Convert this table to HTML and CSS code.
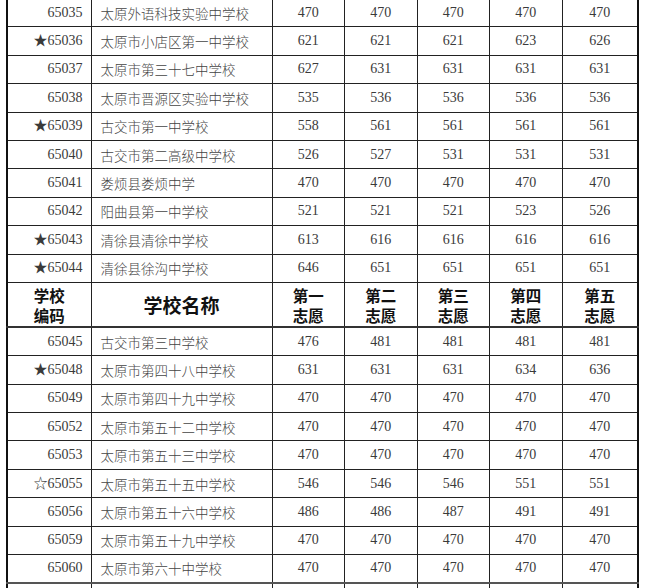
FILE: index.html
```html
<!DOCTYPE html>
<html lang="zh">
<head>
<meta charset="utf-8">
<title>志愿分数线</title>
<link rel="stylesheet" href="styles.css">
</head>
<body>
<table class="sheet">
<colgroup>
<col class="c-code"><col class="c-name"><col class="c-num"><col class="c-num"><col class="c-num"><col class="c-num"><col class="c-last">
</colgroup>
<tbody>
<tr><td class="code">65035</td><td class="name">太原外语科技实验中学校</td><td>470</td><td>470</td><td>470</td><td>470</td><td>470</td></tr>
<tr><td class="code">★65036</td><td class="name">太原市小店区第一中学校</td><td>621</td><td>621</td><td>621</td><td>623</td><td>626</td></tr>
<tr><td class="code">65037</td><td class="name">太原市第三十七中学校</td><td>627</td><td>631</td><td>631</td><td>631</td><td>631</td></tr>
<tr><td class="code">65038</td><td class="name">太原市晋源区实验中学校</td><td>535</td><td>536</td><td>536</td><td>536</td><td>536</td></tr>
<tr><td class="code">★65039</td><td class="name">古交市第一中学校</td><td>558</td><td>561</td><td>561</td><td>561</td><td>561</td></tr>
<tr><td class="code">65040</td><td class="name">古交市第二高级中学校</td><td>526</td><td>527</td><td>531</td><td>531</td><td>531</td></tr>
<tr><td class="code">65041</td><td class="name">娄烦县娄烦中学</td><td>470</td><td>470</td><td>470</td><td>470</td><td>470</td></tr>
<tr><td class="code">65042</td><td class="name">阳曲县第一中学校</td><td>521</td><td>521</td><td>521</td><td>523</td><td>526</td></tr>
<tr><td class="code">★65043</td><td class="name">清徐县清徐中学校</td><td>613</td><td>616</td><td>616</td><td>616</td><td>616</td></tr>
<tr><td class="code">★65044</td><td class="name">清徐县徐沟中学校</td><td>646</td><td>651</td><td>651</td><td>651</td><td>651</td></tr>
<tr class="head"><th><span class="ln">学校</span><span class="ln">编码</span></th><th class="big">学校名称</th><th><span class="ln">第一</span><span class="ln">志愿</span></th><th><span class="ln">第二</span><span class="ln">志愿</span></th><th><span class="ln">第三</span><span class="ln">志愿</span></th><th><span class="ln">第四</span><span class="ln">志愿</span></th><th><span class="ln">第五</span><span class="ln">志愿</span></th></tr>
<tr><td class="code">65045</td><td class="name">古交市第三中学校</td><td>476</td><td>481</td><td>481</td><td>481</td><td>481</td></tr>
<tr><td class="code">★65048</td><td class="name">太原市第四十八中学校</td><td>631</td><td>631</td><td>631</td><td>634</td><td>636</td></tr>
<tr><td class="code">65049</td><td class="name">太原市第四十九中学校</td><td>470</td><td>470</td><td>470</td><td>470</td><td>470</td></tr>
<tr><td class="code">65052</td><td class="name">太原市第五十二中学校</td><td>470</td><td>470</td><td>470</td><td>470</td><td>470</td></tr>
<tr><td class="code">65053</td><td class="name">太原市第五十三中学校</td><td>470</td><td>470</td><td>470</td><td>470</td><td>470</td></tr>
<tr><td class="code">☆65055</td><td class="name">太原市第五十五中学校</td><td>546</td><td>546</td><td>546</td><td>551</td><td>551</td></tr>
<tr><td class="code">65056</td><td class="name">太原市第五十六中学校</td><td>486</td><td>486</td><td>487</td><td>491</td><td>491</td></tr>
<tr><td class="code">65059</td><td class="name">太原市第五十九中学校</td><td>470</td><td>470</td><td>470</td><td>470</td><td>470</td></tr>
<tr><td class="code">65060</td><td class="name">太原市第六十中学校</td><td>470</td><td>470</td><td>470</td><td>470</td><td>470</td></tr>
<tr class="tail"><td></td><td></td><td></td><td></td><td></td><td></td><td></td></tr>
</tbody>
</table>
</body>
</html>
```
FILE: styles.css
```css
html, body {
  margin: 0;
  padding: 0;
  background: #ffffff;
  overflow: hidden;
}

.sheet {
  margin: -2px 0 0 6px;
  width: 633px;
  table-layout: fixed;
  border-collapse: collapse;
  border-left: 2px solid #111;
  border-right: 2px solid #111;
  font-family: "Liberation Serif", "Noto Sans CJK SC", serif;
  color: #3a3a3a;
}

.c-code { width: 84px; }
.c-name { width: 181px; }
.c-num { width: 72.5px; }
.c-last { width: 76px; }

.sheet td,
.sheet th {
  border: 1px solid #222;
  padding: 0;
  text-align: center;
  vertical-align: middle;
  font-size: 14px;
  line-height: 16px;
  overflow: hidden;
  white-space: nowrap;
}

.sheet tr {
  height: 28.4px;
}

.sheet td.code {
  text-align: right;
  padding-right: 8px;
}

.sheet td.name {
  text-align: left;
  padding-left: 9px;
  font-family: "Noto Sans CJK SC", sans-serif;
  font-size: 13.5px;
  font-weight: 300;
  color: #444;
}

.sheet tr.head {
  height: 45px;
}

.sheet tr.head th {
  font-family: "Noto Sans CJK SC", sans-serif;
  font-weight: 700;
  font-size: 15.5px;
  line-height: 20px;
  color: #111;
  border-bottom: 2px solid #333;
}

.sheet tr.head th .ln {
  display: block;
  height: 20px;
  line-height: 20px;
  overflow: hidden;
}

.sheet tr.head th.big {
  font-size: 19px;
  line-height: 24px;
}

.sheet tr.tail td {
  border-top: 2px solid #555;
}
```
